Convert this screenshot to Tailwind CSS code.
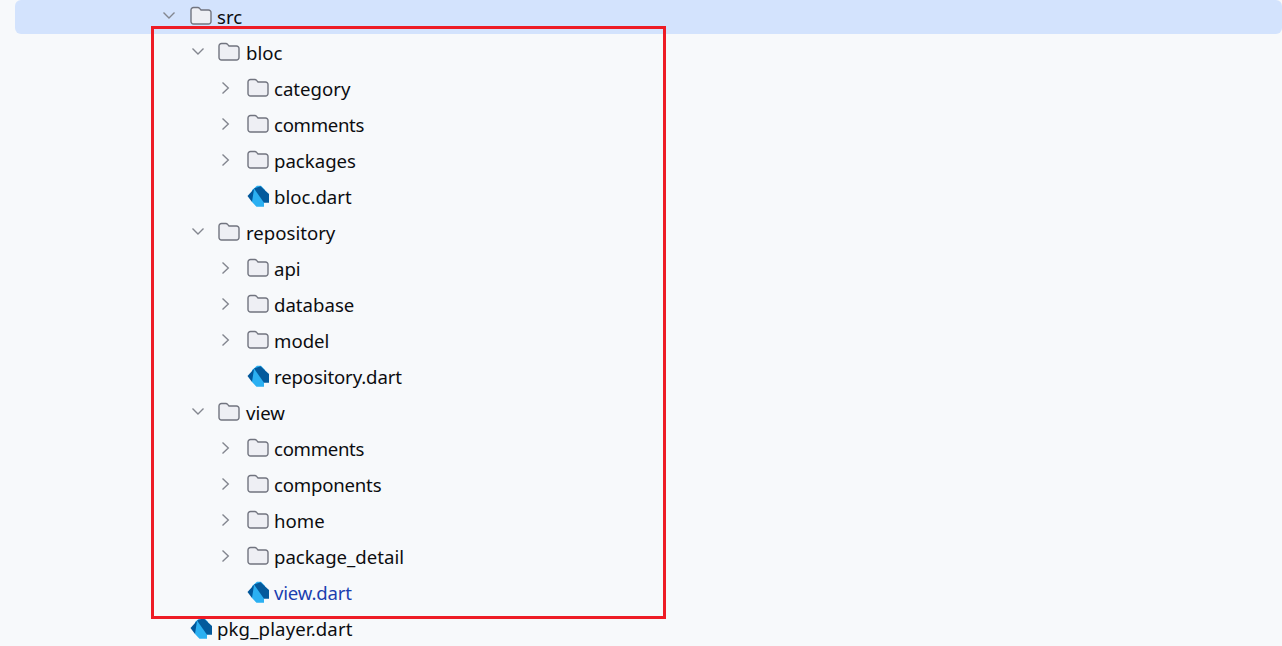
<!DOCTYPE html>
<html><head><meta charset="utf-8"><script src="https://cdn.jsdelivr.net/npm/@tailwindcss/browser@4"></script></head>
<body class="m-0 overflow-hidden">
<svg width="0" height="0" class="absolute"><defs>
<symbol id="cd" viewBox="0 0 16 16"><path d="M2.500 4.500 8 10l5.500-5.500" fill="none" stroke="#83868f" stroke-width="1.400"/></symbol>
<symbol id="cr" viewBox="0 0 16 16"><path d="M5.500 2.500 11.300 8l-5.800 5.500" fill="none" stroke="#83868f" stroke-width="1.400"/></symbol>
<symbol id="fo" viewBox="0 0 22 20"><path d="M1 4a2.500 2.500 0 0 1 2.500-2.500h4.300c.8 0 1.300.3 1.800.9l1.400 1.600h7.500A2.500 2.500 0 0 1 21 6.500v9a2.500 2.500 0 0 1-2.500 2.500h-15A2.500 2.500 0 0 1 1 15.500z" fill="#eeeff4" stroke="#71747f" stroke-width="1.400"/></symbol>
<symbol id="da" viewBox="0 0 22 22"><polygon points="5,5 10,0.800 14,0.800 18,5 17,17.500 17,21.800 9.500,21.800 5,17" fill="#2bb0f2"/><polygon points="0.500,11 5.500,5.500 7,4 5,17" fill="#01579b"/><polygon points="7,3.500 13.500,1.200 22,9 22,17.800 17,17.800" fill="#045a9c"/></symbol>
</defs></svg>
<div class="relative h-[646px] w-[1282px] overflow-hidden bg-[#f7f9fb] font-['Noto_Sans','Open_Sans',sans-serif] text-[18.6px] text-[#0c0d10]">
<ul class="flex flex-col">
<li class="mb-px ml-[15px] flex h-[34px] items-center rounded-md bg-[#d3e3fd] pl-[146px]"><svg class="mr-[13px] -mt-[2px] size-4"><use href="#cd"/></svg><svg class="mr-[5px] -mt-[2px] h-5 w-[22px]"><use href="#fo"/></svg>src</li>
<li class="flex h-[36px] items-center pl-[190px]"><svg class="mr-[12px] -mt-[2px] size-4"><use href="#cd"/></svg><svg class="mr-[6px] -mt-[2px] h-5 w-[22px]"><use href="#fo"/></svg>bloc</li>
<li class="flex h-[36px] items-center pl-[217px]"><svg class="mr-[14px] -mt-[2px] size-4"><use href="#cr"/></svg><svg class="mr-[5px] -mt-[2px] h-5 w-[22px]"><use href="#fo"/></svg>category</li>
<li class="flex h-[36px] items-center pl-[217px] tracking-[-0.3px]"><svg class="mr-[14px] -mt-[2px] size-4"><use href="#cr"/></svg><svg class="mr-[5px] -mt-[2px] h-5 w-[22px]"><use href="#fo"/></svg>comments</li>
<li class="flex h-[36px] items-center pl-[217px]"><svg class="mr-[14px] -mt-[2px] size-4"><use href="#cr"/></svg><svg class="mr-[5px] -mt-[2px] h-5 w-[22px]"><use href="#fo"/></svg>packages</li>
<li class="flex h-[36px] items-center pl-[247px]"><svg class="mr-[5px] -mt-[2px] size-[22px]"><use href="#da"/></svg>bloc.dart</li>
<li class="flex h-[36px] items-center pl-[190px]"><svg class="mr-[12px] -mt-[2px] size-4"><use href="#cd"/></svg><svg class="mr-[6px] -mt-[2px] h-5 w-[22px]"><use href="#fo"/></svg>repository</li>
<li class="flex h-[36px] items-center pl-[217px]"><svg class="mr-[14px] -mt-[2px] size-4"><use href="#cr"/></svg><svg class="mr-[5px] -mt-[2px] h-5 w-[22px]"><use href="#fo"/></svg>api</li>
<li class="flex h-[36px] items-center pl-[217px]"><svg class="mr-[14px] -mt-[2px] size-4"><use href="#cr"/></svg><svg class="mr-[5px] -mt-[2px] h-5 w-[22px]"><use href="#fo"/></svg>database</li>
<li class="flex h-[36px] items-center pl-[217px]"><svg class="mr-[14px] -mt-[2px] size-4"><use href="#cr"/></svg><svg class="mr-[5px] -mt-[2px] h-5 w-[22px]"><use href="#fo"/></svg>model</li>
<li class="flex h-[36px] items-center pl-[247px] tracking-[-0.13px]"><svg class="mr-[5px] -mt-[2px] size-[22px]"><use href="#da"/></svg>repository.dart</li>
<li class="flex h-[36px] items-center pl-[190px]"><svg class="mr-[12px] -mt-[2px] size-4"><use href="#cd"/></svg><svg class="mr-[6px] -mt-[2px] h-5 w-[22px]"><use href="#fo"/></svg>view</li>
<li class="flex h-[36px] items-center pl-[217px] tracking-[-0.3px]"><svg class="mr-[14px] -mt-[2px] size-4"><use href="#cr"/></svg><svg class="mr-[5px] -mt-[2px] h-5 w-[22px]"><use href="#fo"/></svg>comments</li>
<li class="flex h-[36px] items-center pl-[217px] tracking-[-0.2px]"><svg class="mr-[14px] -mt-[2px] size-4"><use href="#cr"/></svg><svg class="mr-[5px] -mt-[2px] h-5 w-[22px]"><use href="#fo"/></svg>components</li>
<li class="flex h-[36px] items-center pl-[217px]"><svg class="mr-[14px] -mt-[2px] size-4"><use href="#cr"/></svg><svg class="mr-[5px] -mt-[2px] h-5 w-[22px]"><use href="#fo"/></svg>home</li>
<li class="flex h-[36px] items-center pl-[217px]"><svg class="mr-[14px] -mt-[2px] size-4"><use href="#cr"/></svg><svg class="mr-[5px] -mt-[2px] h-5 w-[22px]"><use href="#fo"/></svg>package_detail</li>
<li class="flex h-[36px] items-center pl-[247px] tracking-[-0.2px] text-[#1a3fb0]"><svg class="mr-[5px] -mt-[2px] size-[22px]"><use href="#da"/></svg>view.dart</li>
<li class="flex h-[36px] items-center pl-[190px] tracking-[0.13px]"><svg class="mr-[5px] -mt-[2px] size-[22px]"><use href="#da"/></svg>pkg_player.dart</li>
</ul>
<div class="absolute left-[151px] top-[26px] h-[593px] w-[515px] border-[3px] border-[#ee1c25]"></div>
</div>
</body></html>
